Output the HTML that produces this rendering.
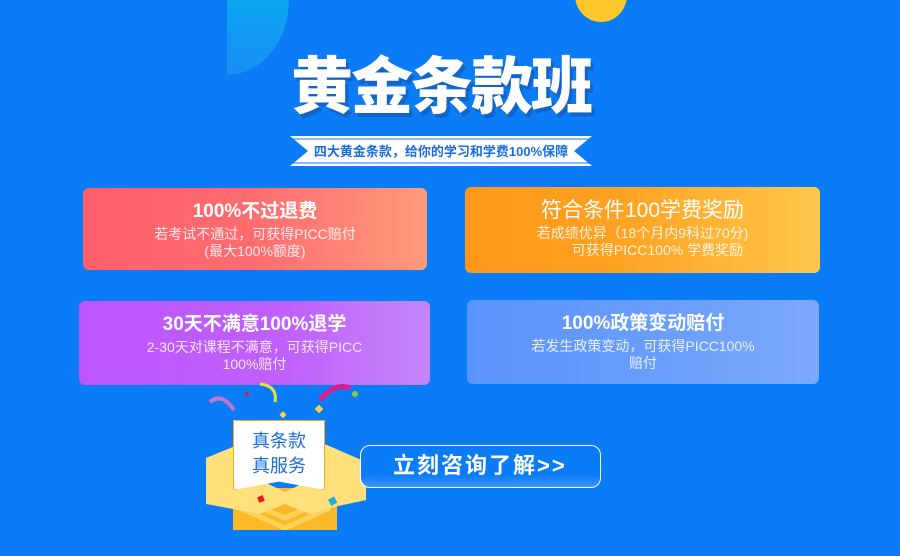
<!DOCTYPE html>
<html><head><meta charset="utf-8"><style>
*{margin:0;padding:0;box-sizing:border-box}
body{width:900px;height:556px;overflow:hidden;background:#0a7cf8;position:relative;font-family:"Liberation Sans","Noto Sans CJK SC",sans-serif}
.abs{position:absolute}
.card{position:absolute;border-radius:6px;color:#fff;text-align:center}
.card h3{font-size:19px;font-weight:bold;line-height:24px;margin-bottom:2px}
.card p{font-size:14px;line-height:17px;opacity:.85}
</style></head><body>
<svg class="abs" style="left:0;top:0" width="300" height="80"><defs><linearGradient id="qg" x1="0" y1="0" x2="0" y2="1"><stop offset="0" stop-color="#0aa6f0"/><stop offset="1" stop-color="#1a8ef5"/></linearGradient></defs>
<path d="M227 0 L289 0 A62 75 0 0 1 227 75 Z" fill="url(#qg)"/></svg>
<div class="abs" style="left:575px;top:-32px;width:52px;height:54px;border-radius:50%;background:#ffc72a"></div>

<div class="abs" style="left:276px;top:50px;width:330px;text-align:center;font-size:62px;font-weight:900;color:#fff;letter-spacing:-2px;line-height:76px;text-shadow:3px 4px 0 #1463c8">黄金条款班</div>

<svg class="abs" style="left:290px;top:134px" width="302" height="34">
<polygon points="0,2 302,2 284,17 302,32 0,32 18,17" fill="#fff"/>
<line x1="2" y1="5" x2="300" y2="5" stroke="#0a7cf8" stroke-width="1"/>
<line x1="2" y1="29" x2="300" y2="29" stroke="#0a7cf8" stroke-width="1"/>
<text x="151" y="22" text-anchor="middle" font-size="13" font-weight="bold" fill="#1a6de0" font-family="Liberation Sans,Noto Sans CJK SC,sans-serif">四大黄金条款，给你的学习和学费100%保障</text>
</svg>

<div class="card" style="left:83px;top:188px;width:344px;height:82px;background:linear-gradient(90deg,#ff5f6b,#ff6d70 50%,#ff9a7c);padding-top:12px">
<h3>100%不过退费</h3><p>若考试不通过，可获得PICC赔付</p><p>(最大100%额度)</p></div>
<div class="card" style="left:465px;top:187px;width:355px;height:86px;background:linear-gradient(90deg,#ff9818,#ffa020 40%,#ffc74a);padding-top:12px">
<h3 style="font-weight:normal;font-size:21px">符合条件100学费奖励</h3><p>若成绩优异（18个月内9科过70分)</p><p style="padding-left:30px">可获得PICC100% 学费奖励</p></div>
<div class="card" style="left:79px;top:301px;width:351px;height:84px;background:linear-gradient(90deg,#bd55ff,#c060fb 60%,#c486fb);padding-top:12px">
<h3>30天不满意100%退学</h3><p>2-30天对课程不满意，可获得PICC</p><p>100%赔付</p></div>
<div class="card" style="left:467px;top:300px;width:352px;height:84px;background:linear-gradient(90deg,#5a93fb,#6b9ffc 60%,#7ea9fb);padding-top:12px">
<h3>100%政策变动赔付</h3><p>若发生政策变动，可获得PICC100%</p><p>赔付</p></div>

<svg class="abs" style="left:200px;top:380px" width="170" height="150">
<path d="M10 22 Q22 12 34 30" stroke="#c775c8" stroke-width="4" fill="none"/>
<path d="M60 4 Q78 6 75 22" stroke="#e5e23a" stroke-width="3" fill="none"/>
<path d="M120 20 Q135 2 150 8" stroke="#e01a8a" stroke-width="5" fill="none"/>
<circle cx="155" cy="14" r="3" fill="#8dc63f"/><circle cx="47" cy="14" r="2" fill="#e02020"/>
<rect x="116" y="26" width="6" height="6" fill="#ffd23f" transform="rotate(45 119 29)"/>
<rect x="81" y="32" width="5" height="5" fill="#ffd23f" transform="rotate(45 83 34)"/>
<polygon points="6,78 45,62 45,130 6,120" fill="#ffe07a"/>
<polygon points="120,62 166,82 166,120 120,130" fill="#ffe07a"/>
<rect x="33" y="108" width="104" height="42" fill="#fbb829"/>
<path d="M40 118 L85 138 L130 118 M40 128 L85 148 L130 128" stroke="#ffd35a" stroke-width="5" fill="none"/>
<polygon points="6,106 60,100 85,112 110,100 165,106 165,118 110,134 85,124 60,134 6,124" fill="#ffe07a"/>
<rect x="58" y="116" width="6" height="6" fill="#e02020" transform="rotate(-20 61 119)"/>
<rect x="129" y="118" width="7" height="7" fill="#20b0e0" transform="rotate(-30 132 121)"/>
</svg>
<div class="abs" style="left:233px;top:420px;width:92px;height:70px;background:#fff;border:1px solid #f0b020;clip-path:polygon(0 0,100% 0,100% 100%,50% 88%,0 100%);text-align:center;color:#1a6de0;font-size:18px;line-height:25px;padding-top:8px">真条款<br>真服务</div>

<div class="abs" style="left:360px;top:445px;width:241px;height:43px;border:1.5px solid #fff;border-radius:10px;background:linear-gradient(180deg,#0a7cf8,#0a7cf8 70%,#3a95f8);color:#fff;font-size:22px;font-weight:bold;line-height:40px;padding-left:32px;letter-spacing:2px">立刻咨询了解&gt;&gt;</div>
</body></html>
